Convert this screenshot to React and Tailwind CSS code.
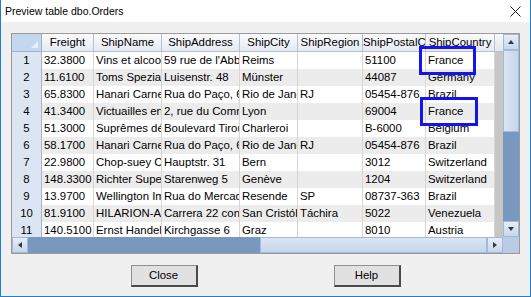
import React from "react";

const columns = [
  { key: "freight", label: "Freight", w: "w-[52px]" },
  { key: "name", label: "ShipName", w: "w-[68px]" },
  { key: "address", label: "ShipAddress", w: "w-[78px]" },
  { key: "city", label: "ShipCity", w: "w-[58px]" },
  { key: "region", label: "ShipRegion", w: "w-[65px]" },
  { key: "postal", label: "ShipPostalCode", w: "w-[63px]" },
  { key: "country", label: "ShipCountry", w: "w-[69px]" },
];

const orders = [
  ["32.3800", "Vins et alcools Chevalier", "59 rue de l'Abbaye", "Reims", "", "51100", "France"],
  ["11.6100", "Toms Spezialitäten", "Luisenstr. 48", "Münster", "", "44087", "Germany"],
  ["65.8300", "Hanari Carnes", "Rua do Paço, 67", "Rio de Janeiro", "RJ", "05454-876", "Brazil"],
  ["41.3400", "Victuailles en stock", "2, rue du Commerce", "Lyon", "", "69004", "France"],
  ["51.3000", "Suprêmes délices", "Boulevard Tirou, 255", "Charleroi", "", "B-6000", "Belgium"],
  ["58.1700", "Hanari Carnes", "Rua do Paço, 67", "Rio de Janeiro", "RJ", "05454-876", "Brazil"],
  ["22.9800", "Chop-suey Chinese", "Hauptstr. 31", "Bern", "", "3012", "Switzerland"],
  ["148.3300", "Richter Supermarkt", "Starenweg 5", "Genève", "", "1204", "Switzerland"],
  ["13.9700", "Wellington Importadora", "Rua do Mercado, 12", "Resende", "SP", "08737-363", "Brazil"],
  ["81.9100", "HILARION-Abastos", "Carrera 22 con Ave. Carlos Soublette #8-35", "San Cristóbal", "Táchira", "5022", "Venezuela"],
  ["140.5100", "Ernst Handel", "Kirchgasse 6", "Graz", "", "8010", "Austria"],
];

const Arrow = ({ dir }) => {
  const pts = {
    up: "1,5 4,1 7,5",
    down: "1,1 4,5 7,1",
    left: "5,1 1,4 5,7",
    right: "1,1 5,4 1,7",
  }[dir];
  const vertical = dir === "up" || dir === "down";
  return (
    <svg width={vertical ? 8 : 6} height={vertical ? 6 : 8} viewBox={vertical ? "0 0 8 6" : "0 0 6 8"}>
      <polygon points={pts} fill="#2e3a48" />
    </svg>
  );
};

const ScrollButton = ({ dir, className }) => (
  <div
    className={`flex items-center justify-center bg-linear-to-b from-[#e6eef8] to-[#c6d7ec] border border-[#a3b8d3] ${className}`}
  >
    <Arrow dir={dir} />
  </div>
);

const App = () => {
  return (
    <div className="relative w-[531px] h-[297px] flex flex-col border-x border-b border-[#1b80d6] bg-[#f0f0f0] font-['Liberation_Sans',Arial,sans-serif] text-black overflow-hidden">
      {/* title bar */}
      <div className="h-[22px] shrink-0 bg-white flex items-center justify-between pl-[4px] pr-[9px]">
        <span className="text-[10.5px] leading-none pt-[1px]">Preview table dbo.Orders</span>
        <svg width="11" height="11" viewBox="0 0 11 11">
          <path d="M0.5 0.5 L10.5 10.5 M10.5 0.5 L0.5 10.5" stroke="#1a1a1a" strokeWidth="1" />
        </svg>
      </div>

      <div className="flex-1 flex flex-col px-[10px] pt-[11px]">
        {/* grid frame */}
        <div className="h-[221px] shrink-0 border border-[#9a9a9a] flex flex-col">
          <div className="flex h-[203px]">
            <div className="w-[491px] flex flex-col overflow-hidden text-[11.4px]">
              {/* header */}
              <div className="flex h-[18px] shrink-0">
                <div className="relative w-[30px] shrink-0 bg-[#c3d7ef] border-r border-b border-[#9fb1c8]">
                  <svg className="absolute right-[3px] bottom-[3px]" width="7" height="7" viewBox="0 0 7 7">
                    <polygon points="7,0 7,7 0,7" fill="#e9eff7" />
                  </svg>
                </div>
                {columns.map((c) => (
                  <div
                    key={c.key}
                    className={`${c.w} shrink-0 overflow-hidden whitespace-nowrap text-center leading-[17px] bg-linear-to-b from-[#fafbfd] to-[#e5eaf1] border-r border-b border-[#b5c1d1]`}
                  >
                    {c.label}
                  </div>
                ))}
                <div className="flex-1 bg-linear-to-b from-[#f7f8fa] to-[#e3e7ec] border-b border-[#b5c1d1]" />
              </div>

              {/* rows */}
              {orders.map((row, i) => (
                <div key={i} className="flex h-[17px] shrink-0">
                  <div className="w-[30px] shrink-0 bg-[#dce6f3] border-r border-[#a5b6cc] text-center leading-[17px]">
                    {i + 1}
                  </div>
                  {row.map((val, j) => (
                    <div
                      key={j}
                      className={`${columns[j].w} shrink-0 overflow-hidden whitespace-nowrap pl-[2px] leading-[17px] border-r border-[#d6d6d6] ${
                        i % 2 === 0 ? "bg-white" : "bg-[#ececec]"
                      }`}
                    >
                      {val}
                    </div>
                  ))}
                  <div className="flex-1 bg-[#c6c6c6]" />
                </div>
              ))}
            </div>

            {/* vertical scrollbar */}
            <div className="w-[16px] flex flex-col">
              <ScrollButton dir="up" className="h-[16px] shrink-0" />
              <div className="h-[82px] shrink-0 bg-linear-to-r from-[#dbe6f4] to-[#c4d6ec] border border-[#a5bad6]" />
              <div className="flex-1 bg-[#7898c0]" />
              <ScrollButton dir="down" className="h-[16px] shrink-0" />
            </div>
          </div>

          {/* horizontal scrollbar */}
          <div className="flex h-[16px]">
            <ScrollButton dir="left" className="w-[16px] shrink-0" />
            <div className="w-[232px] shrink-0 bg-[#7898c0]" />
            <div className="w-[227px] shrink-0 bg-linear-to-b from-[#dbe6f4] to-[#c4d6ec] border border-[#a5bad6]" />
            <ScrollButton dir="right" className="w-[16px] shrink-0" />
            <div className="flex-1 bg-[#b9cce4]" />
          </div>
        </div>

        {/* buttons */}
        <div className="mt-[11px] flex justify-center gap-[136px]">
          {["Close", "Help"].map((label) => (
            <button
              key={label}
              className="w-[67px] h-[22px] bg-[#e1e1e1] border border-[#8f8f8f] border-r-2 border-b-2 border-r-[#4a4a4a] border-b-[#4a4a4a] text-[11.4px] leading-none"
            >
              {label}
            </button>
          ))}
        </div>
      </div>

      {/* highlight boxes */}
      <div className="absolute left-[418px] top-[46px] w-[57px] h-[29px] border-[3px] border-[#1414f0]" />
      <div className="absolute left-[419px] top-[97px] w-[58px] h-[29px] border-[3px] border-[#1414f0]" />
    </div>
  );
};

export default App;
